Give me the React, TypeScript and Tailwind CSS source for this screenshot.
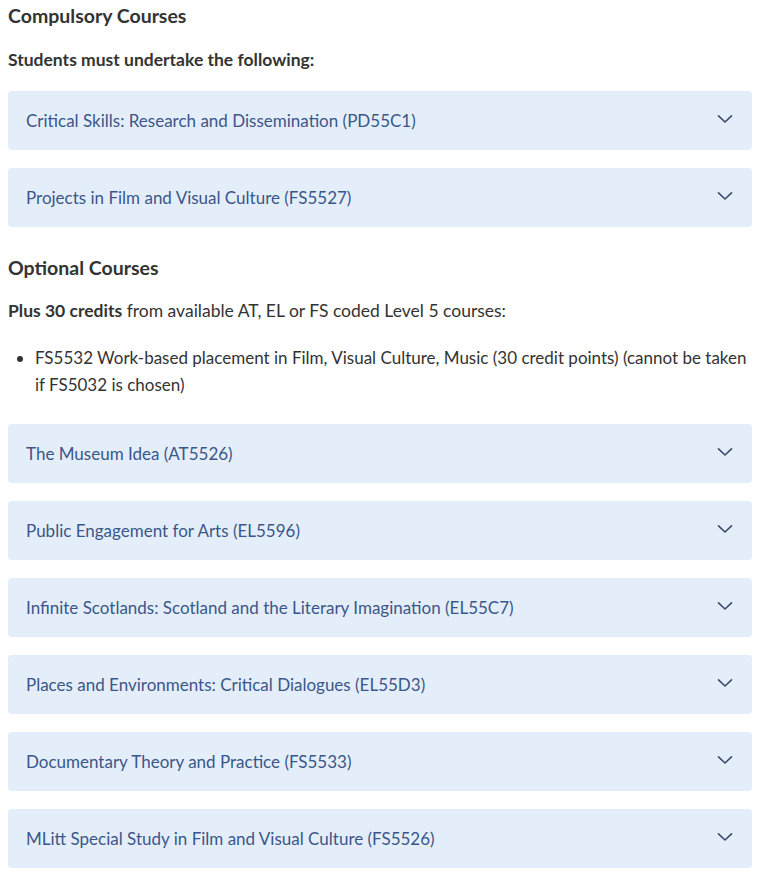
const compulsory = [
  "Critical Skills: Research and Dissemination (PD55C1)",
  "Projects in Film and Visual Culture (FS5527)",
];

const optional = [
  "The Museum Idea (AT5526)",
  "Public Engagement for Arts (EL5596)",
  "Infinite Scotlands: Scotland and the Literary Imagination (EL55C7)",
  "Places and Environments: Critical Dialogues (EL55D3)",
  "Documentary Theory and Practice (FS5533)",
  "MLitt Special Study in Film and Visual Culture (FS5526)",
];

const Chevron = () => (
  <svg width="16" height="10" viewBox="0 0 16 10" fill="none" className="-mt-[3px]">
    <path d="M1.5 1.8 L8 8 L14.5 1.8" stroke="#3c4a6b" strokeWidth="1.6" strokeLinecap="round" strokeLinejoin="round" />
  </svg>
);

const CourseRow = ({ title }: { title: string }) => (
  <button className="flex w-full h-[59px] items-center justify-between rounded-[4px] bg-[#e4eefa] pl-[18px] pr-[19px] text-left">
    <span className="text-[17px] leading-6 text-[#3b5689]">{title}</span>
    <Chevron />
  </button>
);

export default function App() {
  return (
    <div
      className="bg-white pl-[8px] pr-[11px] pb-[12px] text-[#333]"
      style={{ fontFamily: "Lato, 'Liberation Sans', sans-serif" }}
    >
      <h2 className="pt-[5px] text-[19.5px] font-bold leading-[22px]">Compulsory Courses</h2>
      <p className="mt-[22px] text-[17.5px] font-bold leading-[22px]">
        Students must undertake the following:
      </p>
      <div className="mt-[20px] flex flex-col gap-[18px]">
        {compulsory.map((c) => (
          <CourseRow key={c} title={c} />
        ))}
      </div>

      <h2 className="mt-[30px] text-[19.5px] font-bold leading-[22px]">Optional Courses</h2>
      <p className="mt-[21px] text-[17.5px] leading-[22px]">
        <b>Plus 30 credits</b> from available AT, EL or FS coded Level 5 courses:
      </p>
      <ul className="mt-[22px] list-disc pl-[27px] text-[17px] leading-[27px]">
        <li>
          FS5532 Work-based placement in Film, Visual Culture, Music (30 credit points) (cannot be taken if
          FS5032 is chosen)
        </li>
      </ul>
      <div className="mt-[26px] flex flex-col gap-[18px]">
        {optional.map((c) => (
          <CourseRow key={c} title={c} />
        ))}
      </div>
    </div>
  );
}
